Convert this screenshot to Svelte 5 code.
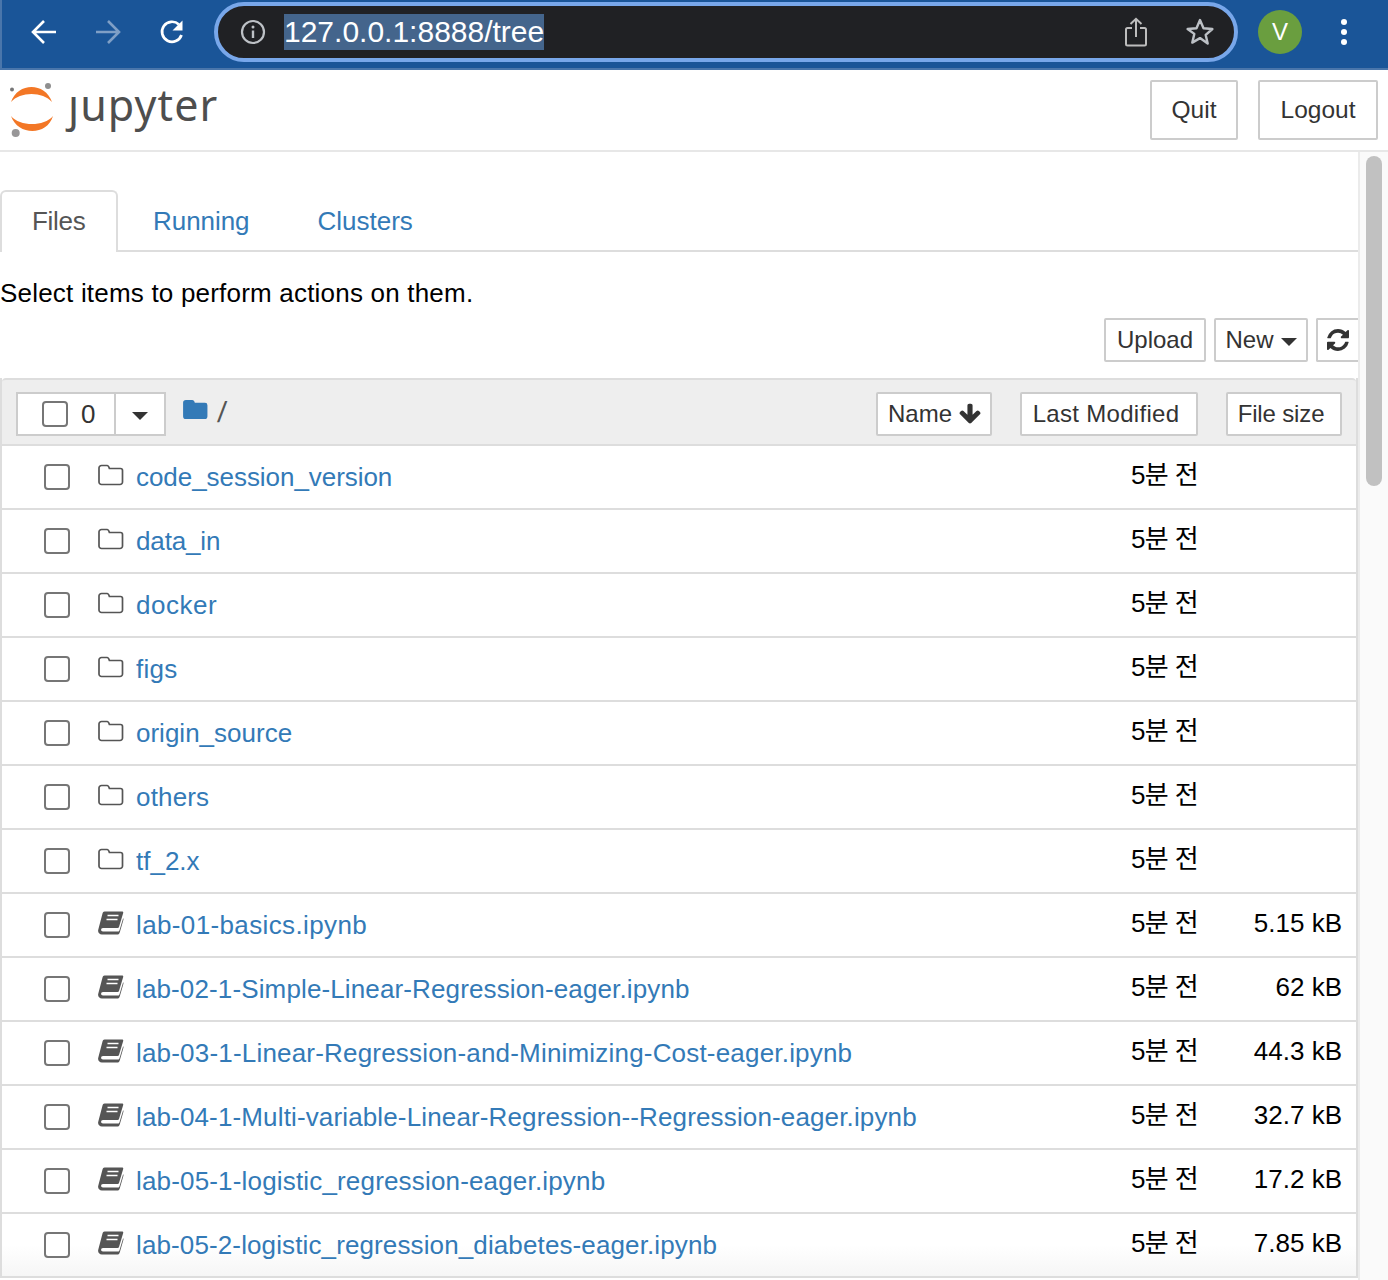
<script>
  const rows = [
    { n: 'code_session_version', t: 'd', s: '', ls: -0.05 },
    { n: 'data_in', t: 'd', s: '', ls: -0.14 },
    { n: 'docker', t: 'd', s: '', ls: 0.5 },
    { n: 'figs', t: 'd', s: '', ls: 0.25 },
    { n: 'origin_source', t: 'd', s: '', ls: 0 },
    { n: 'others', t: 'd', s: '', ls: 0.17 },
    { n: 'tf_2.x', t: 'd', s: '', ls: 0 },
    { n: 'lab-01-basics.ipynb', t: 'n', s: '5.15 kB', ls: 0.37 },
    { n: 'lab-02-1-Simple-Linear-Regression-eager.ipynb', t: 'n', s: '62 kB', ls: 0.13 },
    { n: 'lab-03-1-Linear-Regression-and-Minimizing-Cost-eager.ipynb', t: 'n', s: '44.3 kB', ls: 0.19 },
    { n: 'lab-04-1-Multi-variable-Linear-Regression--Regression-eager.ipynb', t: 'n', s: '32.7 kB', ls: 0.14 },
    { n: 'lab-05-1-logistic_regression-eager.ipynb', t: 'n', s: '17.2 kB', ls: 0.17 },
    { n: 'lab-05-2-logistic_regression_diabetes-eager.ipynb', t: 'n', s: '7.85 kB', ls: 0.12 }
  ];
</script>

<div class="page">
  <div class="chrome">
    <svg class="nav back" viewBox="0 0 28 28"><path d="M26 14H4M14 3 3 14l11 11" fill="none" stroke="#fff" stroke-width="2.6"/></svg>
    <svg class="nav fwd" viewBox="0 0 28 28"><path d="M2 14h22M14 3l11 11-11 11" fill="none" stroke="#7f9fc6" stroke-width="2.6"/></svg>
    <svg class="nav reload" viewBox="0 0 28 28"><path d="M23.5 17a10 10 0 1 1-2.6-10.500" fill="none" stroke="#fff" stroke-width="2.7"/><path d="M24.500 2.500v10h-10z" fill="#fff"/></svg>
    <div class="omni">
      <svg class="info" viewBox="0 0 26 26"><circle cx="13" cy="13" r="11" fill="none" stroke="#bdc1c6" stroke-width="2.2"/><circle cx="13" cy="8" r="1.500" fill="#bdc1c6"/><path d="M13 11.500v7.500" stroke="#bdc1c6" stroke-width="2.400"/></svg>
      <span class="url">127.0.0.1:8888/tree</span>
      <svg class="share" viewBox="0 0 24 30"><path d="M8 11H3.500A1.500 1.500 0 0 0 2 12.500V27a1.500 1.500 0 0 0 1.500 1.500h17A1.500 1.500 0 0 0 22 27V12.500A1.500 1.500 0 0 0 20.500 11H16M12 20V2M6.500 7 12 1.800 17.500 7" fill="none" stroke="#bdbdbd" stroke-width="2"/></svg>
      <svg class="star" viewBox="0 0 30 30"><path d="m15 3 3.500 8.200 8.900.8-6.700 5.900 2 8.700L15 21.100l-7.700 4.500 2-8.700L2.600 12l8.900-.8z" fill="none" stroke="#bdc1c6" stroke-width="2.400" stroke-linejoin="round"/></svg>
    </div>
    <div class="avatar">V</div>
    <div class="dots"><i></i><i></i><i></i></div>
  </div>

  <header class="top">
    <div class="brand">
      <svg class="logo" viewBox="0 0 46 56">
        <path d="M2 20C9 0 36 0 43 20 34 9.300 11 9.300 2 20z" fill="#f37726"/>
        <path d="M2 34C9 54 38 54 44 34 35 44.700 11 44.700 2 34z" fill="#f37726"/>
        <circle cx="39" cy="4" r="3" fill="#8f8f8f"/>
        <circle cx="3" cy="7.500" r="2" fill="#767677"/>
        <circle cx="6.700" cy="51" r="4" fill="#989798"/>
      </svg>
      <span class="word">jupyter</span>
    </div>
    <div class="top-btns">
      <button class="btn big quit">Quit</button>
      <button class="btn big logout">Logout</button>
    </div>
  </header>

  <div class="body">
    <main class="main">
      <nav class="tabs">
        <span class="tab active">Files</span>
        <span class="tab running">Running</span>
        <span class="tab clusters">Clusters</span>
      </nav>
      <p class="hint">Select items to perform actions on them.</p>
      <div class="tools">
        <button class="btn sm upload">Upload</button>
        <button class="btn sm new">New <b class="caret"></b></button>
        <button class="btn sm refresh" aria-label="Refresh">
          <svg viewBox="0 0 1536 1536" width="22" height="22"><path fill="#333" d="M1511 928q0 5-1 7-64 268-268 434.500T764 1536q-146 0-282.500-55T238 1324l-129 129q-19 19-45 19t-45-19-19-45V960q0-26 19-45t45-19h448q26 0 45 19t19 45-19 45l-137 137q71 66 161 102t187 36q134 0 250-65t186-179q11-17 53-117 8-23 30-23h192q13 0 22.500 9.500t9.500 22.500zm25-800v448q0 26-19 45t-45 19h-448q-26 0-45-19t-19-45 19-45l138-138Q969 256 768 256q-134 0-250 65T332 500q-11 17-53 117-8 23-30 23H50q-13 0-22.500-9.500T18 608v-7q65-268 270-434.500T768 0q146 0 284 55.500T1297 212l130-129q19-19 45-19t45 19 19 45z"/></svg>
        </button>
      </div>

      <section class="panel">
        <div class="head">
          <div class="select">
            <label class="sel-main"><span class="check"></span><span class="count">0</span></label>
            <span class="sel-drop"><b class="caret dark"></b></span>
          </div>
          <svg class="crumb" viewBox="0 0 26 22"><path d="M3 1h6.500c1.600 0 2.200 1 2.800 3H23a2.500 2.500 0 0 1 2.500 2.500V18a3 3 0 0 1-3 3H3a3 3 0 0 1-3-3V4a3 3 0 0 1 3-3z" fill="#337ab7"/></svg>
          <span class="slash">/</span>
          <button class="btn sm sort-name">Name
            <svg viewBox="0 0 1792 1792" width="24" height="24"><path d="M1675 832q0 53-37 90l-651 652q-39 37-91 37-53 0-90-37l-651-652q-38-36-38-90 0-53 38-91l74-75q39-37 91-37 53 0 90 37l294 294V256q0-52 38-90t90-38h128q52 0 90 38t38 90v704l294-294q37-37 90-37 52 0 91 37l75 75q37 39 37 91z" fill="#333"/></svg>
          </button>
          <button class="btn sm sort-mod">Last Modified</button>
          <button class="btn sm sort-size">File size</button>
        </div>
        {#each rows as r, i}
          <div class="row" class:last={i === rows.length - 1}>
            <span class="check"></span>
            {#if r.t === 'd'}
              <svg class="ico" viewBox="0 0 26 24"><path d="M3.500 2.500H9c1.300 0 1.800.8 2.400 3h11.100a2 2 0 0 1 2 2V19a2.500 2.500 0 0 1-2.500 2.500H3.500A2.500 2.500 0 0 1 1 19V5a2.500 2.500 0 0 1 2.500-2.500z" fill="none" stroke="#555" stroke-width="1.700"/></svg>
            {:else}
              <svg class="ico" viewBox="0 0 26 24"><path d="M6.500.5H24c1 0 1.500.7 1.200 1.500L21 16c-.2.700-.7 1-1.500 1H5c-2.500 0-2.500 3.500 0 3.500h15c.8 0 1.200-.5 1.500-1.300L25.200 7l.3 1.500-3.700 12.700c-.4 1.400-1.200 2.300-2.600 2.300H4C1 23.500-.5 21 .3 18.500L4.500 2.500C4.800 1.200 5.500.5 6.500.5z" fill="#555"/><path d="M9.500 4.500h11M8.500 8.500h11" stroke="#fff" stroke-width="1.500"/></svg>
            {/if}
            <a class="name" href="#top" style="letter-spacing: {r.ls}px">{r.n}</a>
            <span class="time">5분 전</span>
            <span class="size">{r.s}</span>
          </div>
        {/each}
      </section>
    </main>
    <aside class="track"><div class="thumb"></div></aside>
  </div>
</div>

<style>
  :global(body) { margin: 0; background: #fff; }
  .page { width: 1388px; height: 1280px; overflow: hidden; font-family: "Liberation Sans", "Noto Sans CJK KR", sans-serif; font-size: 26px; color: #000; position: relative; }
  button { font-family: inherit; }

  .chrome { height: 64px; padding-bottom: 4px; border-bottom: 2px solid #4a76ab; border-left: 2px solid #4a76ab; background: #1a5598; display: flex; align-items: center; box-sizing: content-box; }
  .nav { width: 28px; height: 28px; flex: none; }
  .back { margin-left: 28px; }
  .fwd { margin-left: 36px; }
  .reload { margin-left: 36px; }
  .omni { margin-left: 28px; width: 1024px; height: 60px; box-sizing: border-box; border: 4px solid #78a7ea; border-radius: 30px; background: #202124; display: flex; align-items: center; flex: none; }
  .info { width: 26px; height: 26px; margin-left: 22px; flex: none; }
  .url { margin-left: 18px; background: #44658c; color: #fff; font-size: 30px; line-height: 36px; height: 36px; font-family: "Liberation Sans", sans-serif; }
  .share { width: 24px; height: 30px; margin-left: auto; margin-right: 37px; flex: none; }
  .star { width: 30px; height: 30px; margin-right: 19px; flex: none; }
  .avatar { width: 44px; height: 44px; border-radius: 50%; background: #6a9e3f; color: #fff; font-size: 24px; display: flex; align-items: center; justify-content: center; margin-left: 20px; flex: none; }
  .dots { margin-left: 39px; display: flex; flex-direction: column; gap: 4px; }
  .dots i { display: block; width: 6px; height: 6px; border-radius: 50%; background: #fff; }

  .top { height: 80px; border-bottom: 2px solid #e7e7e7; display: flex; justify-content: space-between; box-sizing: content-box; }
  .brand { display: flex; align-items: flex-start; }
  .logo { width: 46px; height: 56px; margin: 12px 0 0 9px; flex: none; }
  .word { font-family: "Noto Sans", sans-serif; font-size: 43px; line-height: 60px; color: #4e4e4e; margin: 5px 0 0 13px; letter-spacing: 1.1px; position: relative; }
  .word::before { content: ""; position: absolute; left: 0; top: 8px; width: 13px; height: 11px; background: #fff; }
  .top-btns { display: flex; gap: 20px; padding: 10px 10px 0 0; }

  .btn { background: #fff; border: 2px solid #ccc; border-radius: 2px; color: #333; padding: 0; box-sizing: border-box; display: inline-flex; align-items: center; justify-content: center; }
  .big { height: 60px; font-size: 24.5px; }
  .quit { width: 88px; }
  .logout { width: 120px; }
  .sm { height: 44px; font-size: 24px; }

  .body { display: flex; height: 1128px; }
  .main { width: 1358px; flex: none; overflow: hidden; }
  .track { width: 30px; border-left: 2px solid #ebebeb; background: #fafafa; box-sizing: border-box; padding: 4px 6px 0 6px; }
  .thumb { width: 16px; height: 330px; border-radius: 8px; background: #c1c1c1; }

  .tabs { margin-top: 38px; height: 60px; border-bottom: 2px solid #ddd; display: flex; box-sizing: content-box; }
  .tab { color: #337ab7; line-height: 62px; }
  .tab.active { width: 118px; height: 62px; box-sizing: border-box; padding-left: 30px; color: #555; border: 2px solid #ddd; border-bottom: 0; border-radius: 6px 6px 0 0; background: #fff; line-height: 58px; letter-spacing: -0.3px; }
  .running { margin-left: 35px; letter-spacing: -0.05px; }
  .clusters { margin-left: 68px; }

  .hint { margin: 23px 0 0; line-height: 36px; height: 36px; letter-spacing: 0.2px; }
  .tools { display: flex; justify-content: flex-end; gap: 8px; margin-top: 7px; height: 44px; }
  .upload { width: 102px; }
  .new { width: 94px; gap: 7px; }
  .refresh { width: 42px; border-right: 0; border-radius: 2px 0 0 2px; }
  .caret { display: inline-block; width: 0; height: 0; border-top: 8px solid #333; border-left: 8px solid transparent; border-right: 8px solid transparent; margin-top: 4px; }

  .panel { margin: 16px 0 0 0; width: 1358px; box-sizing: border-box; border-left: 2px solid #ddd; border-right: 2px solid #ddd; }
  .head { height: 68px; box-sizing: border-box; background: #eee; border-top: 2px solid #ddd; border-bottom: 2px solid #ddd; border-radius: 4px 4px 0 0; display: flex; align-items: center; padding-left: 14px; }
  .select { display: flex; height: 44px; width: 150px; box-sizing: border-box; border: 2px solid #ccc; background: #fff; margin-top: 4px; flex: none; }
  .sel-main { width: 98px; box-sizing: border-box; display: flex; align-items: center; padding-left: 24px; border-right: 2px solid #ccc; }
  .count { margin-left: 13px; color: #333; }
  .sel-drop { flex: 1; display: flex; align-items: center; justify-content: center; }
  .check { display: block; width: 26px; height: 26px; box-sizing: border-box; border: 2px solid #767676; border-radius: 4px; background: #fff; flex: none; }
  .crumb { width: 25px; height: 21px; margin: -5px 0 0 17px; flex: none; }
  .slash { color: #555; font-size: 29px; margin: 0 0 0 10px; transform: skewX(-6deg); }
  .sort-name { margin-left: auto; width: 116px; gap: 6px; padding-left: 2px; }
  .sort-mod { margin-left: 28px; width: 178px; letter-spacing: 0.3px; padding-right: 6px; }
  .sort-size { margin-left: 28px; width: 116px; margin-right: 14px; padding-right: 6px; letter-spacing: -0.15px; }
  .head .btn { margin-top: 4px; }

  .row { height: 64px; box-sizing: border-box; border-bottom: 2px solid #ddd; display: flex; align-items: center; padding-left: 42px; }
  .ico { width: 26px; height: 24px; margin: -5px 0 0 28px; flex: none; }
  .name { color: #337ab7; text-decoration: none; margin-left: 12px; white-space: nowrap; }
  .time { margin-left: auto; margin-top: -10px; letter-spacing: -0.6px; }
  .size { width: 144px; text-align: right; margin-right: 14px; margin-top: -4px; }
  .row.last { background: linear-gradient(#fff 50%, #f6f6f6); }
</style>
